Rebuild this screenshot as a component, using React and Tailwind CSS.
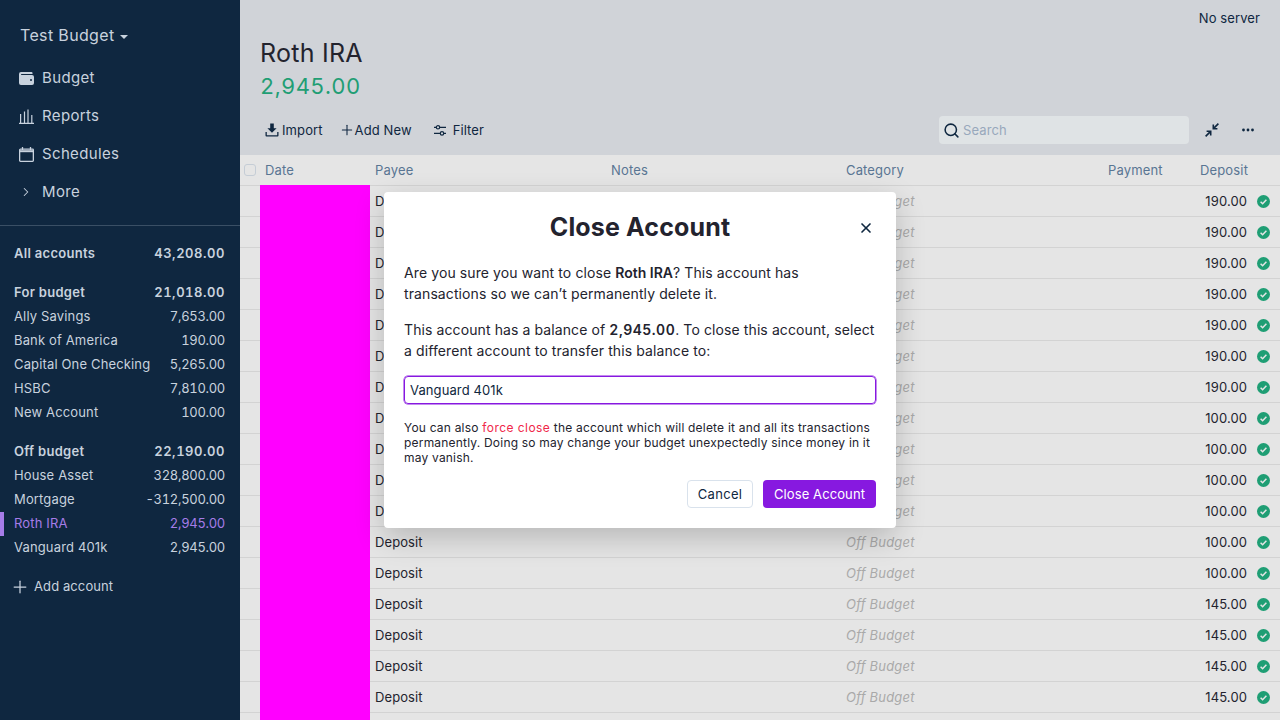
import { ChevronRight, Plus, Search, X } from "lucide-react";

const forBudget = [
  ["Ally Savings", "7,653.00"],
  ["Bank of America", "190.00"],
  ["Capital One Checking", "5,265.00"],
  ["HSBC", "7,810.00"],
  ["New Account", "100.00"],
];

const offBudget = [
  ["House Asset", "328,800.00"],
  ["Mortgage", "-312,500.00"],
  ["Roth IRA", "2,945.00", true],
  ["Vanguard 401k", "2,945.00"],
];

const deposits = [
  "190.00", "190.00", "190.00", "190.00", "190.00", "190.00", "190.00",
  "100.00", "100.00", "100.00", "100.00", "100.00", "100.00",
  "145.00", "145.00", "145.00", "145.00",
];

const WalletIcon = () => (
  <svg width="15" height="13" viewBox="0 0 15 13" className="fill-[#c8d2de]">
    <path d="M2 0h10.5a1 1 0 0 1 1 1v1H2.5a.5.5 0 0 0 0 1H13a2 2 0 0 1 2 2v6a2 2 0 0 1-2 2H2a2 2 0 0 1-2-2V2a2 2 0 0 1 2-2z" />
    <circle cx="12" cy="8" r="1" fill="#0f2740" />
  </svg>
);

const ChartIcon = () => (
  <svg width="15" height="15" viewBox="0 0 15 15" fill="none" stroke="#c8d2de" strokeWidth="1.2">
    <path d="M0 14.4h15M1.6 14V5M5.5 14V2.5M9 14V0.5M12.8 14V6" />
  </svg>
);

const CalendarIcon = () => (
  <svg width="15" height="15" viewBox="0 0 15 15" fill="none" stroke="#c8d2de" strokeWidth="1.3">
    <rect x="0.65" y="2.2" width="13.7" height="12.1" rx="0.8" />
    <path d="M0.6 4.2h13.8" strokeWidth="2" />
    <path d="M3.5 0v3M11.5 0v3" />
  </svg>
);

const ImportIcon = () => (
  <svg width="14" height="14" viewBox="0 0 14 14" className="fill-[#0f2740]">
    <path d="M5.2 0.5h3.6v4.7h2.8L7 9.8 2.4 5.2h2.8z" />
    <path d="M0.5 9h1.3v3.2h10.4V9h1.3v3.6a.9.9 0 0 1-.9.9H1.4a.9.9 0 0 1-.9-.9z" />
  </svg>
);

const FilterIcon = () => (
  <svg width="12" height="11" viewBox="0 0 12 11" fill="none" stroke="#0f2740" strokeWidth="1.2">
    <path d="M0 2.3h2.3M5.7 2.3H12M0 8.4h6.3M9.7 8.4H12" />
    <circle cx="4" cy="2.3" r="1.7" />
    <circle cx="8" cy="8.4" r="1.7" />
  </svg>
);

const ShrinkIcon = () => (
  <svg width="14" height="14" viewBox="0 0 14 14" fill="none" stroke="#0f2740" strokeWidth="1.6">
    <path d="M13.4 0.6 8.4 5.6M8.3 1.6v4.1h4.1" />
    <path d="M0.6 13.4l5-5M1.6 8.3h4.1v4.1" />
  </svg>
);

const DotsIcon = () => (
  <svg width="12" height="4" viewBox="0 0 12 4" className="fill-[#0f2740]">
    <circle cx="1.5" cy="2" r="1.4" />
    <circle cx="6" cy="2" r="1.4" />
    <circle cx="10.5" cy="2" r="1.4" />
  </svg>
);

const ClearedIcon = () => (
  <svg width="13" height="13" viewBox="0 0 13 13" className="shrink-0">
    <circle cx="6.5" cy="6.5" r="6.5" fill="#1f9e74" />
    <path d="M3.6 6.7l2 2 3.8-4" fill="none" stroke="#e5e5e5" strokeWidth="1.5" />
  </svg>
);

const NavItem = ({ icon, label }) => (
  <div className="flex h-[38px] items-center pl-[19px] text-[15px] tracking-[0.35px] text-[#c8d2de]">
    <span className="flex w-[23px] items-center">{icon}</span>
    {label}
  </div>
);

const AccountRow = ({ name, amount, active }) => (
  <div
    className={`flex h-6 items-center justify-between border-l-4 pl-2.5 pr-[15px] text-[13px] tracking-[0.15px] ${
      active ? "border-[#a67ce8] text-[#a67ce8]" : "border-transparent text-[#c8d2de]"
    }`}
  >
    <span>{name}</span>
    <span className="tabular-nums tracking-[-0.3px]">{amount}</span>
  </div>
);

const GroupRow = ({ name, amount, className }) => (
  <div className={`flex h-6 items-center justify-between pl-3.5 pr-[15px] text-[13px] font-semibold tracking-[0.3px] text-[#c8d2de] ${className}`}>
    <span>{name}</span>
    <span className="tabular-nums tracking-[0.55px]">{amount}</span>
  </div>
);

const Sidebar = () => (
  <aside className="flex h-full w-[240px] shrink-0 flex-col bg-[#0f2740]">
    <div className="flex h-[59px] items-end pb-3 pl-5 text-[16px] tracking-[0.35px] text-[#c8d2de]">
      Test Budget
      <span className="mb-2 ml-[5px] border-x-4 border-t-4 border-x-transparent border-t-[#c8d2de]" />
    </div>
    <NavItem icon={<WalletIcon />} label="Budget" />
    <NavItem icon={<ChartIcon />} label="Reports" />
    <NavItem icon={<CalendarIcon />} label="Schedules" />
    <NavItem icon={<ChevronRight size={14} strokeWidth={1.8} />} label="More" />
    <div className="mt-[14px] border-t border-[#3a4f65] pt-4">
      <GroupRow name="All accounts" amount="43,208.00" />
      <GroupRow name="For budget" amount="21,018.00" className="mt-[15px]" />
      {forBudget.map(([name, amount]) => (
        <AccountRow key={name} name={name} amount={amount} />
      ))}
      <GroupRow name="Off budget" amount="22,190.00" className="mt-[15px]" />
      {offBudget.map(([name, amount, active]) => (
        <AccountRow key={name} name={name} amount={amount} active={active} />
      ))}
      <div className="mt-[15px] flex h-6 items-center pl-2.5 text-[13px] text-[#c8d2de]">
        <Plus size={20} strokeWidth={1.5} className="mr-1" />
        Add account
      </div>
    </div>
  </aside>
);

const Toolbar = () => (
  <div className="flex h-[50px] items-center pl-[25px] pr-[26px] text-[13px] text-[#0f2740]">
    <ImportIcon />
    <span className="ml-[3px] mt-0.5">Import</span>
    <Plus size={16} strokeWidth={1.6} className="ml-4" />
    <span className="mt-0.5">Add New</span>
    <span className="ml-[22px]">
      <FilterIcon />
    </span>
    <span className="ml-[7px] mt-0.5">Filter</span>
    <div className="ml-auto flex h-7 w-[250px] items-center rounded bg-[#dfe3e5] pl-1 text-[#98a8bc]">
      <Search size={17} strokeWidth={2.2} className="text-[#0f2740]" />
      <span className="ml-[3px] mt-0.5">Search</span>
    </div>
    <span className="ml-4">
      <ShrinkIcon />
    </span>
    <span className="ml-[23px]">
      <DotsIcon />
    </span>
  </div>
);

const HeaderCell = ({ className, children }) => <span className={`mt-0.5 ${className}`}>{children}</span>;

const TableHeader = () => (
  <div className="flex h-[31px] shrink-0 items-center border-b border-[#d3d3d3] bg-[#e5e5e5] text-[13px] tracking-[0.15px] text-[#597593]">
    <span className="ml-1 h-3 w-3 rounded-[3px] border border-[#c5cdd6]" />
    <HeaderCell className="ml-[9px] w-[110px]">Date</HeaderCell>
    <HeaderCell className="w-[236px]">Payee</HeaderCell>
    <HeaderCell className="w-[235px]">Notes</HeaderCell>
    <HeaderCell className="w-[262px]">Category</HeaderCell>
    <HeaderCell className="w-[92px]">Payment</HeaderCell>
    <HeaderCell>Deposit</HeaderCell>
  </div>
);

const TableRow = ({ amount }) => (
  <div className="flex h-[31px] shrink-0 items-center border-b border-[#d3d3d3] bg-[#e5e5e5] text-[13px] text-[#23232e]">
    <span className="-mt-px ml-5 h-[31px] w-[110px] self-start bg-[#ff00ff]" />
    <span className="ml-[5px] mt-0.5 w-[471px]">Deposit</span>
    <span className="mt-0.5 w-[257px] italic tracking-[0.2px] text-[#a9a9a9]">Off Budget</span>
    <span className="mt-0.5 w-[144px] text-right">{amount}</span>
    <span className="ml-2.5 mt-px">
      <ClearedIcon />
    </span>
  </div>
);

const Main = () => (
  <main className="flex h-full min-w-0 flex-1 flex-col overflow-hidden bg-[#d0d3d8]">
    <div className="flex justify-end pr-5 pt-[10px] text-[13px] leading-4 text-[#0f2740]">No server</div>
    <h1 className="ml-5 mt-3 text-[25px] leading-[30px] tracking-[0.25px] text-[#23232e]">Roth IRA</h1>
    <div className="ml-5 mt-[3px] text-[22px] leading-[30px] tabular-nums tracking-[0.4px] text-[#1f9e74]">2,945.00</div>
    <div className="mt-1">
      <Toolbar />
    </div>
    <TableHeader />
    {deposits.map((amount, i) => (
      <TableRow key={i} amount={amount} />
    ))}
    {/* row that runs off the bottom of the window, only its date cell shows */}
    <div className="flex h-[7px] shrink-0 bg-[#e5e5e5]">
      <span className="-mt-px ml-5 h-2 w-[110px] bg-[#ff00ff]" />
    </div>
  </main>
);

const CloseModal = () => (
  <div className="absolute left-[384px] top-[192px] h-[336px] w-[512px] rounded bg-white px-5 pt-5 shadow-[0_10px_30px_rgba(0,0,0,0.2)]">
    <div className="relative text-center text-[25px] font-bold leading-[30px] tracking-[0.15px] text-[#23232e]">
      Close Account
      <X size={16} strokeWidth={2.5} className="absolute right-[2px] top-[8px] text-[#0f2740]" />
    </div>
    <p className="mt-5 text-[14px] leading-[21px] tracking-[0.1px] text-[#23232e]">
      Are you sure you want to close <b className="font-semibold tracking-normal">Roth IRA</b>? This account has transactions so we can’t permanently delete it.
    </p>
    <p className="mt-[15px] text-[14px] leading-[21px] tracking-[0.1px] text-[#23232e]">
      This account has a balance of <b className="font-semibold tabular-nums tracking-[0.5px]">2,945.00</b>. To close this account, select a different account to transfer this balance to:
    </p>
    <div className="mt-[15px] flex h-7 items-center rounded border border-[#8719e0] pl-[5px] pt-0.5 text-[13px] text-[#0f2740] shadow-[0_0_0_0.5px_#8719e0]">
      Vanguard 401k
    </div>
    <p className="mt-4 text-[12px] leading-[15px] tracking-[0.2px] text-[#23232e]">
      You can also <span className="tracking-[0.45px] text-[#f0284a]">force close</span> the account which will delete it and all its transactions permanently. Doing so may change your budget unexpectedly since money in it may vanish.
    </p>
    <div className="mt-[15px] flex justify-end gap-2.5 text-[13px]">
      <button className="h-7 w-[66px] rounded border border-[#d9e2ec] pt-0.5 tracking-[0.3px] text-[#0f2740]">Cancel</button>
      <button className="h-7 w-[113px] rounded bg-[#8719e0] pt-0.5 tracking-[0.1px] text-white">Close Account</button>
    </div>
  </div>
);

export default function App() {
  return (
    <div className="relative flex h-[720px] w-[1280px] overflow-hidden font-['Inter',sans-serif] tracking-[0.1px]">
      <Sidebar />
      <Main />
      <CloseModal />
    </div>
  );
}
